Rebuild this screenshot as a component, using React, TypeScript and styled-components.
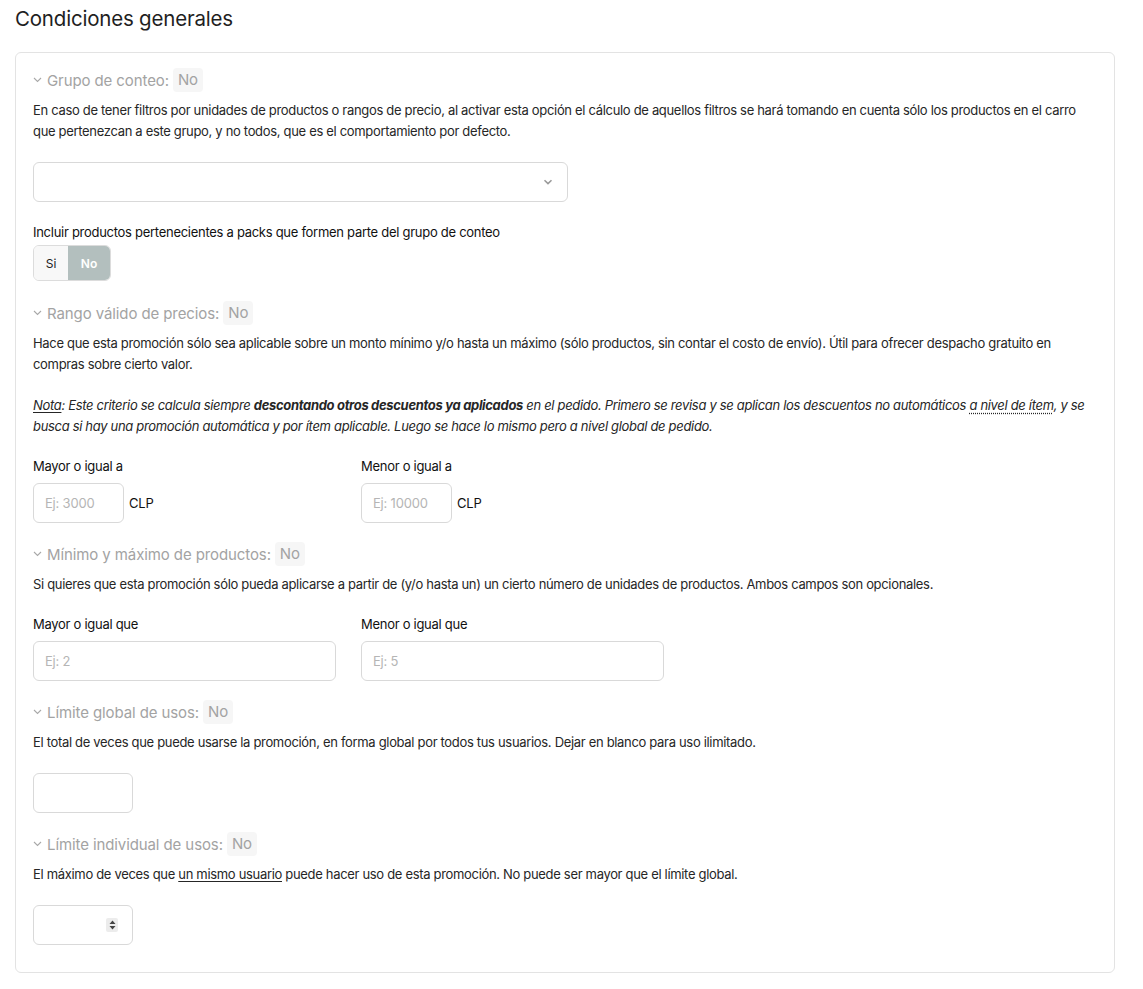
import React from 'react';
import styled, { createGlobalStyle } from 'styled-components';

const GlobalStyle = createGlobalStyle`
  body {
    margin: 0;
    background: #ffffff;
    font-family: Inter, 'Noto Sans', Arial, sans-serif;
    color: #222;
  }
`;

const Page = styled.div`
  padding: 7px 28px 16px 15px;
`;

const Title = styled.h2`
  margin: 0 0 21px 0;
  font-size: 20.5px;
  line-height: 24px;
  font-weight: 400;
  color: #1f1f1f;
  letter-spacing: -0.2px;
`;

const Card = styled.div`
  border: 1px solid #e3e3e3;
  border-radius: 6px;
  padding: 15px 17px 27px 17px;
  display: flex;
  flex-direction: column;
  gap: 19px;
`;

const Section = styled.section`
  display: flex;
  flex-direction: column;
`;

const Header = styled.div`
  display: flex;
  align-items: center;
  height: 24px;
  margin-bottom: 8px;
  color: #a3a3a3;
  font-size: 15px;
  letter-spacing: -0.1px;
`;

const Chevron = styled.span`
  display: inline-flex;
  width: 10px;
  margin: 0 4px 0 0;
`;

const Badge = styled.span`
  margin-left: 4px;
  padding: 0 5px;
  height: 24px;
  line-height: 24px;
  border-radius: 4px;
  background: #f6f6f6;
`;

const Body = styled.div`
  display: flex;
  flex-direction: column;
  gap: 20px;
`;

const Text = styled.p<{ $italic?: boolean }>`
  margin: 0;
  font-size: 13px;
  line-height: 21px;
  color: #262626;
  font-style: ${(p) => (p.$italic ? 'italic' : 'normal')};
  letter-spacing: -0.32px;

  u {
    text-decoration: underline;
    text-underline-offset: 2px;
  }
`;

const Dotted = styled.span`
  text-decoration: underline dotted;
  text-underline-offset: 3px;
`;

const SelectBox = styled.div`
  width: 535px;
  height: 40px;
  box-sizing: border-box;
  border: 1px solid #d9d9d9;
  border-radius: 6px;
  display: flex;
  align-items: center;
  justify-content: flex-end;
  padding-right: 14px;
`;

const Field = styled.div`
  display: flex;
  flex-direction: column;
  gap: 3px;
  padding-bottom: 1px;
`;

const FieldRow = styled.div`
  display: flex;
  gap: 25px;
`;

const Label = styled.label<{ $tall?: boolean }>`
  font-size: 13px;
  line-height: ${(p) => (p.$tall ? '20px' : '18px')};
  color: #111;
  letter-spacing: -0.28px;
`;

const FieldGroup = styled.div<{ $width?: number }>`
  display: flex;
  flex-direction: column;
  gap: 8px;
  width: ${(p) => (p.$width ? `${p.$width}px` : 'auto')};
`;

const InputWrap = styled.div`
  display: flex;
  align-items: center;
  gap: 5px;
`;

const Input = styled.input<{ $width: number }>`
  width: ${(p) => p.$width}px;
  height: 40px;
  box-sizing: border-box;
  border: 1px solid #d9d9d9;
  border-radius: 6px;
  padding: 0 12px 0 11px;
  font-family: Inter, 'Noto Sans', Arial, sans-serif;
  font-size: 13px;
  letter-spacing: -0.2px;
  color: #222;
  outline: none;

  &::placeholder {
    color: #b5b5b5;
  }
`;

const Unit = styled.span`
  font-size: 13px;
  color: #111;
  letter-spacing: -0.2px;
`;

const Toggle = styled.div`
  display: inline-flex;
  width: 78px;
  height: 36px;
  box-sizing: border-box;
  border: 1px solid #dcdcdc;
  border-radius: 6px;
  overflow: hidden;
`;

const ToggleOption = styled.button<{ $active?: boolean }>`
  border: none;
  margin: 0;
  padding: 0;
  flex: ${(p) => (p.$active ? '0 0 42px' : '1')};
  background: ${(p) => (p.$active ? '#b3bfbe' : '#f8f8f8')};
  color: ${(p) => (p.$active ? '#ffffff' : '#222')};
  font-family: Inter, 'Noto Sans', Arial, sans-serif;
  font-size: 12px;
  font-weight: ${(p) => (p.$active ? 600 : 400)};
`;

const NumberBox = styled.div`
  width: 100px;
  height: 40px;
  box-sizing: border-box;
  border: 1px solid #d9d9d9;
  border-radius: 6px;
  display: flex;
  align-items: center;
  justify-content: flex-end;
  padding-right: 14px;
`;

const Spinner = styled.span`
  display: inline-flex;
  align-items: center;
  justify-content: center;
  width: 12px;
  height: 14px;
  background: #ececec;
  border-radius: 2px;
`;

const SectionHeader = ({ title }: { title: string }) => (
  <Header>
    <Chevron>
      <svg width="9" height="6" viewBox="0 0 9 6" fill="none">
        <path d="M1 1l3.5 3.5L8 1" stroke="#a8a8a8" strokeWidth="1.1" />
      </svg>
    </Chevron>
    {title}
    <Badge>No</Badge>
  </Header>
);

export default function App() {
  return (
    <>
      <GlobalStyle />
      <Page>
        <Title>Condiciones generales</Title>
        <Card>
          <Section>
            <SectionHeader title="Grupo de conteo:" />
            <Body>
              <Text>
                En caso de tener filtros por unidades de productos o rangos de precio, al activar esta opción el cálculo de aquellos filtros se hará tomando en cuenta sólo los productos en el carro que pertenezcan a este grupo, y no todos, que es el comportamiento por defecto.
              </Text>
              <SelectBox>
                <svg width="10" height="6" viewBox="0 0 10 6" fill="none">
                  <path d="M1.5 1.2L5 4.6l3.5-3.4" stroke="#9a9a9a" strokeWidth="1.6" />
                </svg>
              </SelectBox>
              <Field>
                <Label $tall>Incluir productos pertenecientes a packs que formen parte del grupo de conteo</Label>
                <Toggle>
                  <ToggleOption>Si</ToggleOption>
                  <ToggleOption $active>No</ToggleOption>
                </Toggle>
              </Field>
            </Body>
          </Section>

          <Section>
            <SectionHeader title="Rango válido de precios:" />
            <Body>
              <Text>
                Hace que esta promoción sólo sea aplicable sobre un monto mínimo y/o hasta un máximo (sólo productos, sin contar el costo de envío). Útil para ofrecer despacho gratuito en compras sobre cierto valor.
              </Text>
              <Text $italic>
                <u>Nota</u>: Este criterio se calcula siempre <b>descontando otros descuentos ya aplicados</b> en el pedido. Primero se revisa y se aplican los descuentos no automáticos <Dotted>a nivel de ítem</Dotted>, y se busca si hay una promoción automática y por ítem aplicable. Luego se hace lo mismo pero a nivel global de pedido.
              </Text>
              <FieldRow>
                <FieldGroup $width={303}>
                  <Label>Mayor o igual a</Label>
                  <InputWrap>
                    <Input $width={91} placeholder="Ej: 3000" />
                    <Unit>CLP</Unit>
                  </InputWrap>
                </FieldGroup>
                <FieldGroup>
                  <Label>Menor o igual a</Label>
                  <InputWrap>
                    <Input $width={91} placeholder="Ej: 10000" />
                    <Unit>CLP</Unit>
                  </InputWrap>
                </FieldGroup>
              </FieldRow>
            </Body>
          </Section>

          <Section>
            <SectionHeader title="Mínimo y máximo de productos:" />
            <Body>
              <Text>
                Si quieres que esta promoción sólo pueda aplicarse a partir de (y/o hasta un) un cierto número de unidades de productos. Ambos campos son opcionales.
              </Text>
              <FieldRow>
                <FieldGroup>
                  <Label>Mayor o igual que</Label>
                  <Input $width={303} placeholder="Ej: 2" />
                </FieldGroup>
                <FieldGroup>
                  <Label>Menor o igual que</Label>
                  <Input $width={303} placeholder="Ej: 5" />
                </FieldGroup>
              </FieldRow>
            </Body>
          </Section>

          <Section>
            <SectionHeader title="Límite global de usos:" />
            <Body>
              <Text>
                El total de veces que puede usarse la promoción, en forma global por todos tus usuarios. Dejar en blanco para uso ilimitado.
              </Text>
              <Input $width={100} />
            </Body>
          </Section>

          <Section>
            <SectionHeader title="Límite individual de usos:" />
            <Body>
              <Text>
                El máximo de veces que <u>un mismo usuario</u> puede hacer uso de esta promoción. No puede ser mayor que el límite global.
              </Text>
              <NumberBox>
                <Spinner>
                  <svg width="7" height="10" viewBox="0 0 7 10">
                    <path d="M3.5 0.5L6.5 4H0.5z M3.5 9.5L0.5 6h6z" fill="#444" />
                  </svg>
                </Spinner>
              </NumberBox>
            </Body>
          </Section>
        </Card>
      </Page>
    </>
  );
}
